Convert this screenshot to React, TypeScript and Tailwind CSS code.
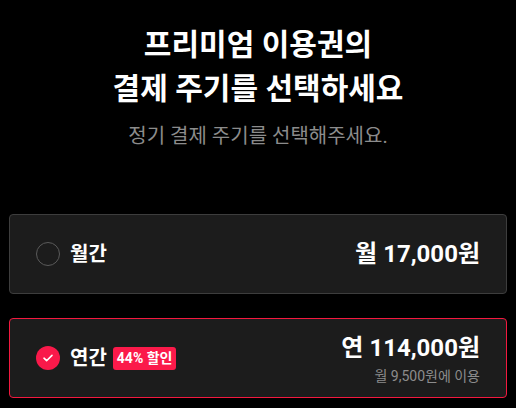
export default function App() {
  const font = { fontFamily: "Roboto, 'Noto Sans CJK KR', sans-serif" };

  return (
    <div className="min-h-[408px] w-full bg-black text-white px-[9px] pt-[23px]" style={font}>
      {/* heading */}
      <div className="flex flex-col items-center">
        <h1 className="text-center text-[30px] font-bold leading-[44px]">
          프리미엄 이용권의
          <br />
          결제 주기를 선택하세요
        </h1>
        <p className="mt-[11px] text-[20px] leading-[28px] text-[#8c8c8c]">
          정기 결제 주기를 선택해주세요.
        </p>
      </div>

      {/* options */}
      <div className="mt-[64px] flex flex-col gap-[24px]">
        <div className="flex h-[80px] items-center justify-between rounded-[4px] border border-[#3d3d3d] bg-[#1c1c1c] px-[26px]">
          <div className="flex items-center gap-[10px]">
            <span className="h-[24px] w-[24px] rounded-full border border-[#5a5a5a]" />
            <span className="text-[20px] font-bold">월간</span>
          </div>
          <span className="text-[24px] font-bold">월 17,000원</span>
        </div>

        <div className="flex h-[80px] items-center justify-between rounded-[4px] border border-[#f3193f] bg-[#1c1c1c] px-[26px]">
          <div className="flex items-center gap-[10px]">
            <span className="flex h-[24px] w-[24px] items-center justify-center rounded-full bg-[#f9194a]">
              <svg width="12" height="12" viewBox="0 0 12 12" fill="none">
                <path d="M2 6.2l2.6 2.5L10 3.4" stroke="white" strokeWidth="1.6" strokeLinecap="round" strokeLinejoin="round" />
              </svg>
            </span>
            <span className="flex items-center gap-[6px]">
              <span className="text-[20px] font-bold">연간</span>
              <span className="rounded-[3px] bg-[#fb1a4a] px-[4px] py-[2px] text-[14px] font-bold leading-[19px]">
                44% 할인
              </span>
            </span>
          </div>
          <div className="flex flex-col items-end gap-[3px]">
            <span className="text-[24px] font-bold leading-[32px]">연 114,000원</span>
            <span className="text-[14px] leading-[18px] text-[#8c8c8c]">월 9,500원에 이용</span>
          </div>
        </div>
      </div>
    </div>
  );
}
